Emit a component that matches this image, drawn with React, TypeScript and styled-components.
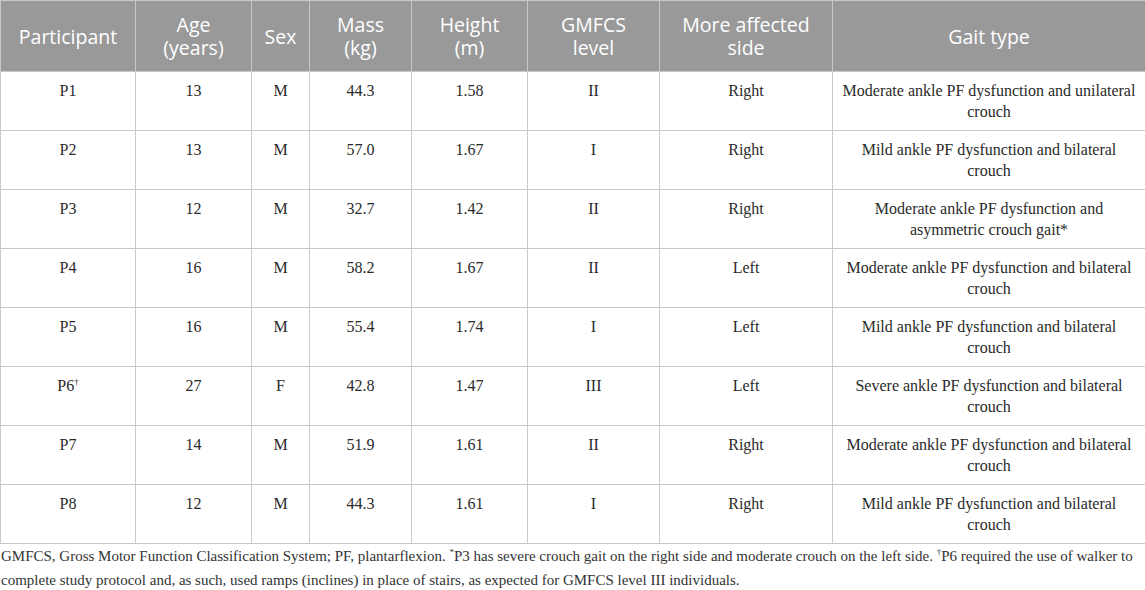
import React from 'react';
import styled, { createGlobalStyle } from 'styled-components';

type Row = {
	id: string;
	mark?: string;
	age: number;
	sex: string;
	mass: string;
	height: string;
	level: string;
	side: string;
	gait: string;
};

const rows: Row[] = [
	{ id: 'P1', age: 13, sex: 'M', mass: '44.3', height: '1.58', level: 'II', side: 'Right', gait: 'Moderate ankle PF dysfunction and unilateral crouch' },
	{ id: 'P2', age: 13, sex: 'M', mass: '57.0', height: '1.67', level: 'I', side: 'Right', gait: 'Mild ankle PF dysfunction and bilateral crouch' },
	{ id: 'P3', age: 12, sex: 'M', mass: '32.7', height: '1.42', level: 'II', side: 'Right', gait: 'Moderate ankle PF dysfunction and asymmetric crouch gait*' },
	{ id: 'P4', age: 16, sex: 'M', mass: '58.2', height: '1.67', level: 'II', side: 'Left', gait: 'Moderate ankle PF dysfunction and bilateral crouch' },
	{ id: 'P5', age: 16, sex: 'M', mass: '55.4', height: '1.74', level: 'I', side: 'Left', gait: 'Mild ankle PF dysfunction and bilateral crouch' },
	{ id: 'P6', mark: '†', age: 27, sex: 'F', mass: '42.8', height: '1.47', level: 'III', side: 'Left', gait: 'Severe ankle PF dysfunction and bilateral crouch' },
	{ id: 'P7', age: 14, sex: 'M', mass: '51.9', height: '1.61', level: 'II', side: 'Right', gait: 'Moderate ankle PF dysfunction and bilateral crouch' },
	{ id: 'P8', age: 12, sex: 'M', mass: '44.3', height: '1.61', level: 'I', side: 'Right', gait: 'Mild ankle PF dysfunction and bilateral crouch' },
];

const columns: { label: string[]; width: number }[] = [
	{ label: ['Participant'], width: 135 },
	{ label: ['Age', '(years)'], width: 116 },
	{ label: ['Sex'], width: 58 },
	{ label: ['Mass', '(kg)'], width: 102 },
	{ label: ['Height', '(m)'], width: 116 },
	{ label: ['GMFCS', 'level'], width: 132 },
	{ label: ['More affected', 'side'], width: 173 },
	{ label: ['Gait type'], width: 313 },
];

const App: React.FC = () => {
	return (
		<>
			<GlobalStyle />
			<Page>
				<Table>
					<colgroup>
						{columns.map((c) => (
							<col key={c.label[0]} style={{ width: c.width }} />
						))}
					</colgroup>
					<thead>
						<tr>
							{columns.map((c) => (
								<Th key={c.label[0]}>
									{c.label.map((l, i) => (
										<HeadLine key={i}>{l}</HeadLine>
									))}
								</Th>
							))}
						</tr>
					</thead>
					<tbody>
						{rows.map((r) => (
							<tr key={r.id}>
								<Td>
									{r.id}
									{r.mark && <Mark>{r.mark}</Mark>}
								</Td>
								<Td>{r.age}</Td>
								<Td>{r.sex}</Td>
								<Td>{r.mass}</Td>
								<Td>{r.height}</Td>
								<Td>{r.level}</Td>
								<Td>{r.side}</Td>
								<Td $wide>{r.gait}</Td>
							</tr>
						))}
					</tbody>
				</Table>
				<Footnote>
					GMFCS, Gross Motor Function Classification System; PF, plantarflexion. <Mark>*</Mark>P3 has
					severe crouch gait on the right side and moderate crouch on the left side. <Mark>†</Mark>P6
					required the use of walker to complete study protocol and, as such, used ramps (inclines) in
					place of stairs, as expected for GMFCS level III individuals.
				</Footnote>
			</Page>
		</>
	);
};

const GlobalStyle = createGlobalStyle`
	body {
		margin: 0;
		background: #fff;
	}
`;

const Page = styled.div`
	width: 1145px;
`;

const Table = styled.table`
	width: 1145px;
	border-collapse: collapse;
	table-layout: fixed;
`;

const Th = styled.th`
	height: 71px;
	padding: 0 4px;
	box-sizing: border-box;
	background: #999999;
	color: #fff;
	font-family: 'Open Sans', sans-serif;
	font-size: 19.5px;
	font-weight: 400;
	line-height: 23px;
	text-align: center;
	vertical-align: middle;
	border: 1px solid #c8c8c8;
`;

const HeadLine = styled.div`
	white-space: nowrap;
`;

const Td = styled.td<{ $wide?: boolean }>`
	height: 59px;
	box-sizing: border-box;
	padding: ${({ $wide }) => ($wide ? '8px 8px 0' : '8px 4px 0')};
	font-family: 'Liberation Serif', serif;
	font-size: 16px;
	line-height: 21px;
	color: #2a2a2a;
	text-align: center;
	vertical-align: top;
	border: 1px solid #c8c8c8;
`;

const Mark = styled.span`
	font-size: 9px;
	line-height: 0;
	vertical-align: 6px;
`;

const Footnote = styled.p`
	margin: 0;
	padding: 0 0 0 1px;
	font-family: 'Liberation Serif', serif;
	font-size: 15px;
	line-height: 24px;
	color: #333;
`;

export default App;
